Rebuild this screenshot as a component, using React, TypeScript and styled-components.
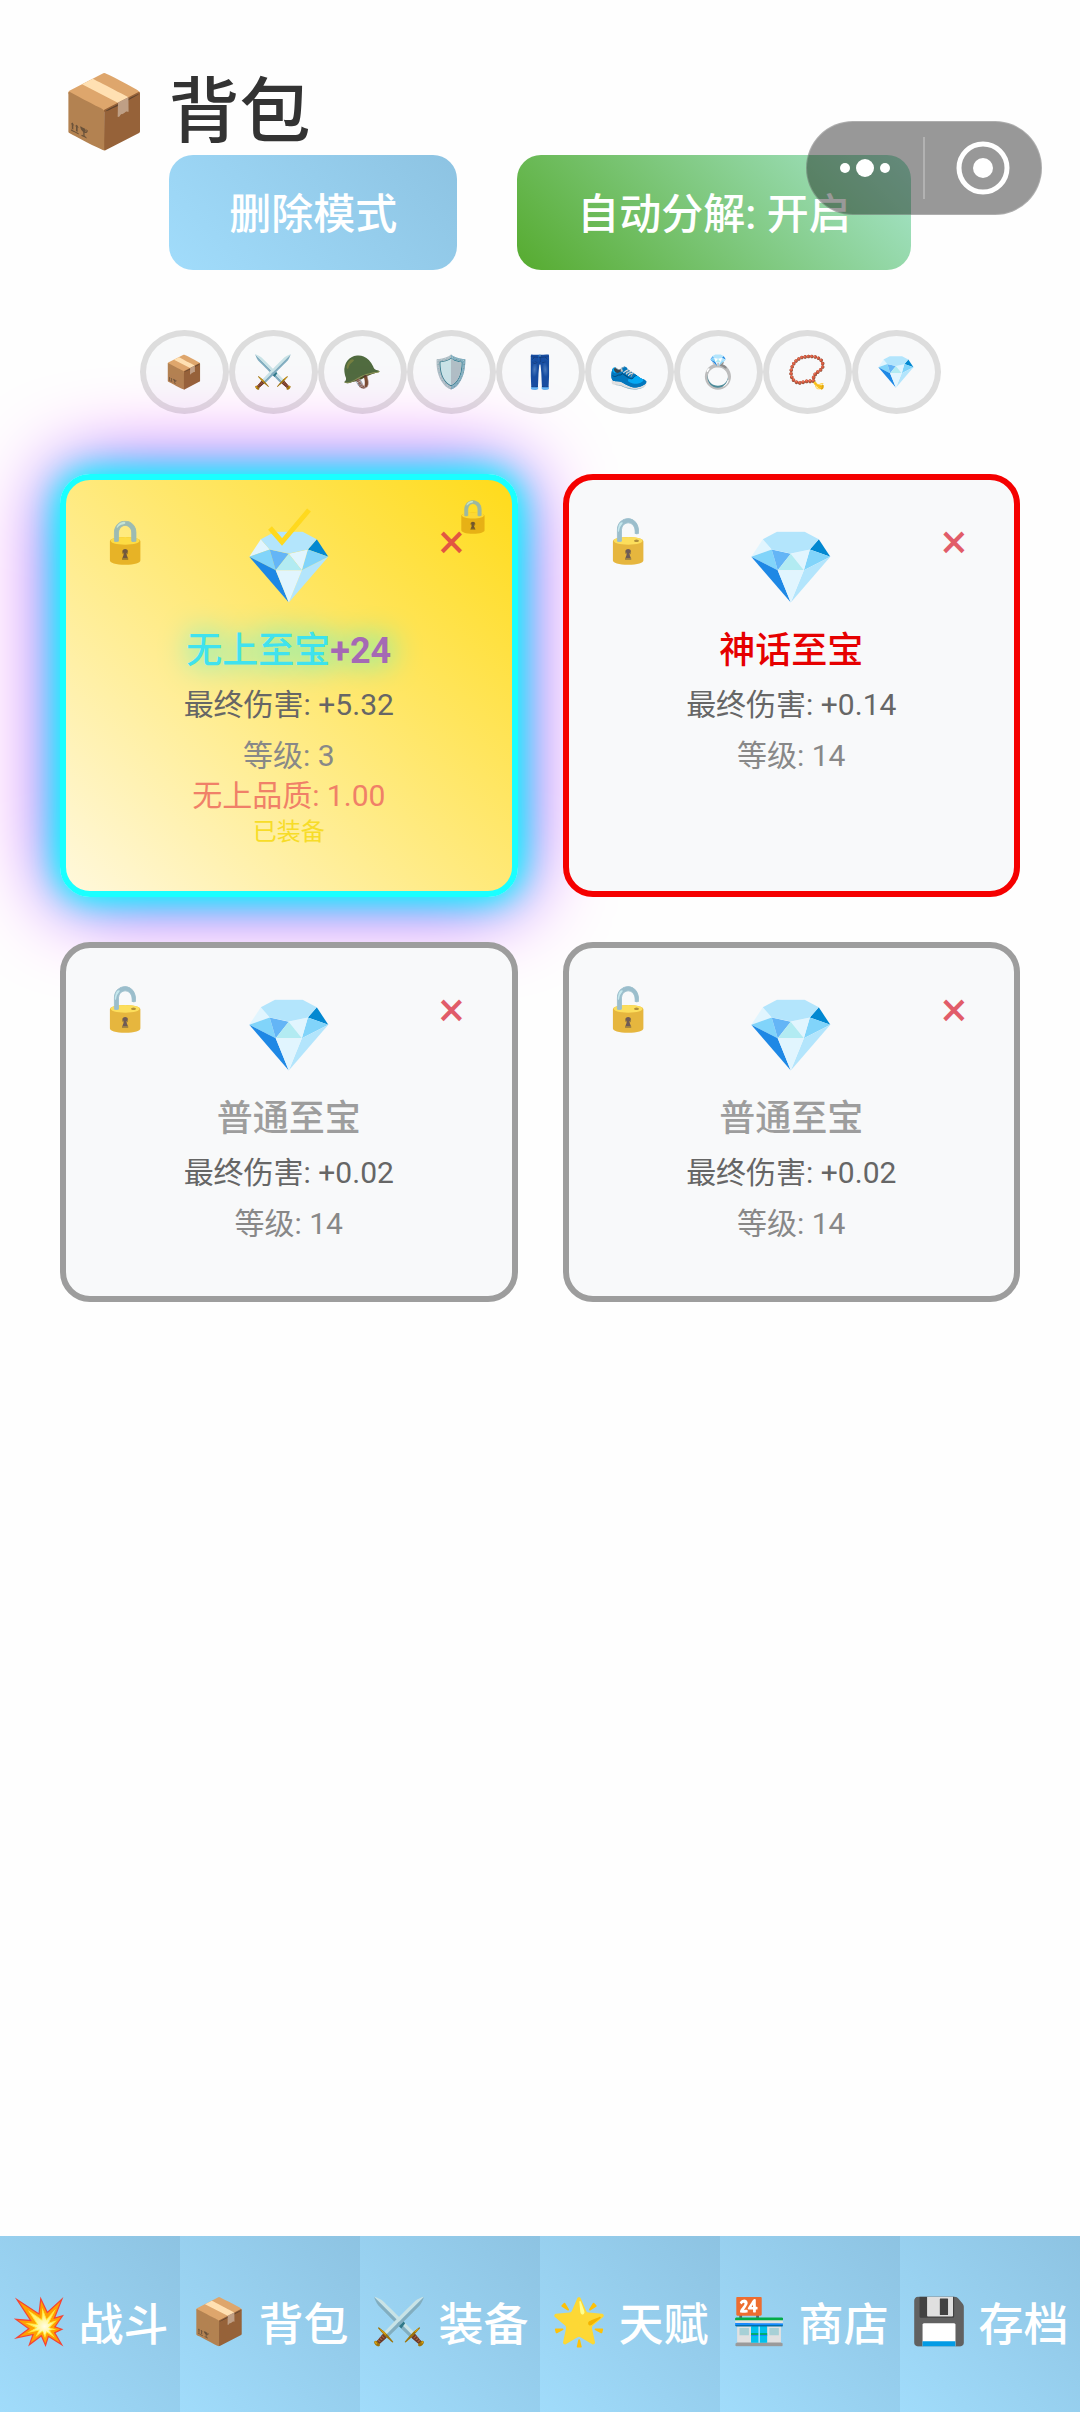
import React from "react";
import styled, { createGlobalStyle } from "styled-components";

const GlobalStyle = createGlobalStyle`
  * { box-sizing: border-box; }
  body {
    margin: 0;
    background: #fefefe;
    color: #333;
    font-family: Roboto, "Noto Sans CJK SC", "Noto Color Emoji", sans-serif;
  }
  button { font-family: inherit; margin: 0; cursor: pointer; }
`;

const Page = styled.div`
  display: flex;
  flex-direction: column;
  min-height: 100vh;
  overflow: hidden;
`;

const Main = styled.main`
  flex: 1;
  padding: 68px 60px 60px;
`;

const Title = styled.h1`
  display: flex;
  align-items: center;
  gap: 20px;
  margin: 0;
  font-size: 71px;
  line-height: 87px;
  font-weight: 500;
`;

const Actions = styled.div`
  display: flex;
  justify-content: center;
  gap: 60px;
`;

const ActionButton = styled.button<{ $from: string; $to: string }>`
  height: 115px;
  padding: 0 60px 4px;
  border: 0;
  border-radius: 24px;
  background: linear-gradient(45deg, ${(p) => p.$from}, ${(p) => p.$to});
  color: #fff;
  font-size: 42px;
  font-weight: 500;
  white-space: nowrap;
`;

const Filters = styled.div`
  display: flex;
  justify-content: center;
  margin: 60px 0;
`;

const FilterButton = styled.button`
  display: flex;
  align-items: center;
  justify-content: center;
  width: 89px;
  height: 84px;
  padding: 0;
  border: 6px solid #ddd;
  border-radius: 50%;
  background: #f8f9fa;
  font-size: 32px;
`;

const Grid = styled.div`
  display: grid;
  grid-template-columns: 1fr 1fr;
  gap: 45px;
`;

const Card = styled.article<{ $color: string; $equipped?: boolean }>`
  position: relative;
  min-height: 360px;
  padding: 43px 30px 42px;
  border: 6px solid ${(p) => p.$color};
  border-radius: 30px;
  text-align: center;
  background: ${(p) =>
    p.$equipped ? "linear-gradient(45deg, #fff8dc, #ffdb1a)" : "#f8f9fa"};
  box-shadow: ${(p) =>
    p.$equipped
      ? "0 0 30px #00ffff, 0 0 60px #00ffff, 0 0 90px #ff00ff"
      : "none"};
`;

const Gem = styled.div`
  font-size: 72px;
  line-height: 90px;
`;

const Name = styled.h2<{ $color: string; $glow?: boolean }>`
  margin: 14px 0 0;
  color: ${(p) => p.$color};
  font-size: 36px;
  line-height: 48px;
  font-weight: 500;
  text-shadow: ${(p) => (p.$glow ? "0 0 30px #00ffff" : "none")};
`;

const Enhance = styled.strong`
  color: #a569b4;
  font-weight: 700;
`;

const Stat = styled.p`
  margin: 9px 0 0;
  color: #666;
  font-size: 30px;
  line-height: 42px;
`;

const Level = styled(Stat)`
  color: #888;
`;

const Quality = styled.p`
  margin: 0;
  color: #f08068;
  font-size: 30px;
  line-height: 38px;
`;

const Equipped = styled.p`
  margin: 0;
  color: #f7dc28;
  font-size: 24px;
  line-height: 34px;
`;

const CornerButton = styled.button<{ $side: "left" | "right" }>`
  position: absolute;
  top: 32px;
  ${(p) => p.$side}: 30px;
  width: 60px;
  height: 60px;
  padding: 0;
  border: 0;
  background: none;
  color: #dc3545;
  font-size: ${(p) => (p.$side === "left" ? 42 : 48)}px;
  line-height: 60px;
  opacity: 0.8;
`;

const Tick = styled.span`
  position: absolute;
  top: 28px;
  left: 200px;
  line-height: 0;
`;

const LockBadge = styled.span`
  position: absolute;
  top: 12px;
  right: 18px;
  font-size: 32px;
  line-height: 48px;
  opacity: 0.8;
`;

const Nav = styled.nav`
  display: grid;
  grid-template-columns: repeat(6, 1fr);
`;

const NavButton = styled.button`
  display: flex;
  align-items: center;
  justify-content: center;
  gap: 11px;
  height: 176px;
  padding: 0 0 5px;
  border: 0;
  background: linear-gradient(45deg, #a1dcfb, #8dc3e2);
  color: #fff;
  font-size: 45px;
  font-weight: 500;
  white-space: nowrap;
`;

const Capsule = styled.div`
  position: absolute;
  top: 121px;
  right: 38px;
  display: flex;
  align-items: center;
  width: 236px;
  height: 94px;
  border: 1px solid rgba(255, 255, 255, 0.2);
  border-radius: 47px;
  background: rgba(0, 0, 0, 0.4);
`;

const CapsuleButton = styled.button`
  display: flex;
  flex: 1;
  align-items: center;
  justify-content: center;
  height: 100%;
  padding: 0;
  border: 0;
  background: none;
`;

const Divider = styled.span`
  width: 2px;
  height: 62px;
  background: rgba(255, 255, 255, 0.25);
`;

const filters = [
  ["📦", "全部"],
  ["⚔️", "武器"],
  ["🪖", "头盔"],
  ["🛡️", "护甲"],
  ["👖", "裤子"],
  ["👟", "鞋子"],
  ["💍", "戒指"],
  ["📿", "项链"],
  ["💎", "至宝"],
];

type Item = {
  name: string;
  color: string;
  border: string;
  damage: string;
  level: number;
  enhance?: string;
  quality?: string;
  equipped?: boolean;
};

const items: Item[] = [
  { name: "无上至宝", color: "#40e2ee", border: "#1affff", damage: "+5.32", level: 3, enhance: "+24", quality: "1.00", equipped: true },
  { name: "神话至宝", color: "#e60000", border: "#f50000", damage: "+0.14", level: 14 },
  { name: "普通至宝", color: "#9d9d9d", border: "#9d9d9d", damage: "+0.02", level: 14 },
  { name: "普通至宝", color: "#9d9d9d", border: "#9d9d9d", damage: "+0.02", level: 14 },
];

const tabs = [
  ["💥", "战斗"],
  ["📦", "背包"],
  ["⚔️", "装备"],
  ["🌟", "天赋"],
  ["🏪", "商店"],
  ["💾", "存档"],
];

function ItemCard({ item }: { item: Item }) {
  return (
    <Card $color={item.border} $equipped={item.equipped}>
      <Gem>💎</Gem>
      <Name $color={item.color} $glow={item.equipped}>
        {item.name}
        {item.enhance && <Enhance>{item.enhance}</Enhance>}
      </Name>
      <Stat>最终伤害: {item.damage}</Stat>
      <Level>等级: {item.level}</Level>
      {item.quality && <Quality>无上品质: {item.quality}</Quality>}
      {item.equipped && <Equipped>已装备</Equipped>}
      <CornerButton $side="left" aria-label="锁定">
        {item.equipped ? "🔒" : "🔓"}
      </CornerButton>
      <CornerButton $side="right" aria-label="删除">×</CornerButton>
      {item.equipped && (
        <Tick>
          <svg width="46" height="40" viewBox="0 0 46 40" fill="none" stroke="#ffd91e" strokeWidth="5">
            <path d="M4 20 L16 34 L43 2" />
          </svg>
        </Tick>
      )}
      {item.equipped && <LockBadge>🔒</LockBadge>}
    </Card>
  );
}

export default function App() {
  return (
    <>
      <GlobalStyle />
      <Page>
        <Main>
          <Title>
            <span>📦</span>
            <span>背包</span>
          </Title>
          <Actions>
            <ActionButton $from="#a1dcfb" $to="#8dc3e2">删除模式</ActionButton>
            <ActionButton $from="#56ab2f" $to="#a8e6cf">自动分解: 开启</ActionButton>
          </Actions>
          <Filters>
            {filters.map(([icon, label]) => (
              <FilterButton key={label} aria-label={label}>{icon}</FilterButton>
            ))}
          </Filters>
          <Grid>
            {items.map((item, i) => (
              <ItemCard key={i} item={item} />
            ))}
          </Grid>
        </Main>
        <Nav>
          {tabs.map(([icon, label]) => (
            <NavButton key={label}>
              <span>{icon}</span>
              <span>{label}</span>
            </NavButton>
          ))}
        </Nav>
      </Page>
      <Capsule>
        <CapsuleButton aria-label="更多">
          <svg width="52" height="20" viewBox="0 0 52 20" fill="#fff">
            <circle cx="6" cy="10" r="5" />
            <circle cx="26" cy="10" r="9" />
            <circle cx="46" cy="10" r="5" />
          </svg>
        </CapsuleButton>
        <Divider />
        <CapsuleButton aria-label="关闭">
          <svg width="54" height="54" viewBox="0 0 54 54">
            <circle cx="27" cy="27" r="24" fill="none" stroke="#fff" strokeWidth="5" />
            <circle cx="27" cy="27" r="10" fill="#fff" />
          </svg>
        </CapsuleButton>
      </Capsule>
    </>
  );
}
